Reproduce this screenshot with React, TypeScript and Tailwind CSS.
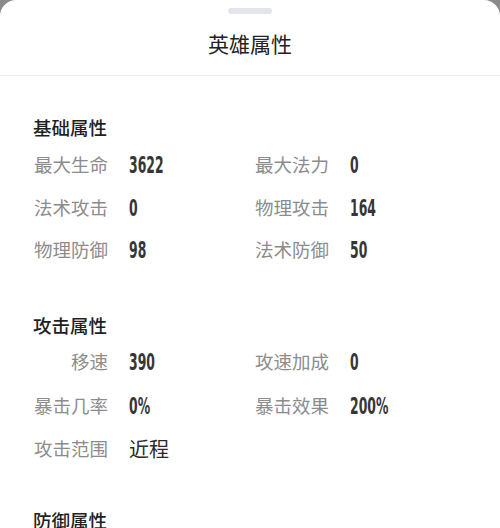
import React from 'react';

type Stat = { label: string; value: string; cjk?: boolean };

const cjk = "font-['Noto_Sans_CJK_SC','Noto_Sans',sans-serif]";
const num = "font-['DejaVu_Sans_Condensed','Liberation_Sans',sans-serif]";

const sections: { title: string; rows: Stat[][]; rowH: string; mt: string; gap: string }[] = [
  {
    title: '基础属性',
    mt: 'mt-[38px]',
    gap: 'mt-[4px]',
    rowH: 'h-[42.5px]',
    rows: [
      [{ label: '最大生命', value: '3622' }, { label: '最大法力', value: '0' }],
      [{ label: '法术攻击', value: '0' }, { label: '物理攻击', value: '164' }],
      [{ label: '物理防御', value: '98' }, { label: '法术防御', value: '50' }],
    ],
  },
  {
    title: '攻击属性',
    mt: 'mt-[40px]',
    gap: 'mt-[3px]',
    rowH: 'h-[43.5px]',
    rows: [
      [{ label: '移速', value: '390' }, { label: '攻速加成', value: '0' }],
      [{ label: '暴击几率', value: '0%' }, { label: '暴击效果', value: '200%' }],
      [{ label: '攻击范围', value: '近程', cjk: true }],
    ],
  },
  {
    title: '防御属性',
    mt: 'mt-[36px]',
    gap: 'mt-[3px]',
    rowH: 'h-[43px]',
    rows: [],
  },
];

const StatCell = ({ stat }: { stat: Stat }) => (
  <div className="flex items-center">
    <span className={`w-[75px] text-right text-[18.5px] text-[#8c8c8c] whitespace-nowrap ${cjk}`}>{stat.label}</span>
    {stat.cjk ? (
      <span className={`ml-[21px] text-[20px] text-[#2a2a2a] ${cjk}`}>{stat.value}</span>
    ) : (
      <span className={`ml-[21px] inline-block origin-left scale-x-[0.6] text-[23px] font-bold text-[#363636] ${num}`}>
        {stat.value}
      </span>
    )}
  </div>
);

export default function App() {
  return (
    <div className="h-[528px] w-[500px] overflow-hidden bg-[#8a8a8a]">
      <div className="h-full rounded-t-[16px] bg-white">
        {/* 顶部把手 + 标题 */}
        <div className="flex flex-col items-center border-b border-[#efefef] pt-[8px] pb-[18px]">
          <div className="h-[6px] w-[44px] rounded-full bg-[#e4e5ea]" />
          <h1 className={`mt-[15px] text-[21px] leading-[28px] text-[#222] ${cjk}`}>英雄属性</h1>
        </div>

        <div className="px-[33px]">
          {sections.map((s) => (
            <section key={s.title} className={s.mt}>
              <h2 className={`h-[26px] text-[18.5px] leading-[26px] font-medium text-[#1f1f1f] ${cjk}`}>{s.title}</h2>
              <div className={s.gap}>
                {s.rows.map((row, i) => (
                  <div key={i} className={`grid grid-cols-[221px_1fr] items-center ${s.rowH}`}>
                    {row.map((st) => (
                      <StatCell key={st.label} stat={st} />
                    ))}
                  </div>
                ))}
              </div>
            </section>
          ))}
        </div>
      </div>
    </div>
  );
}
